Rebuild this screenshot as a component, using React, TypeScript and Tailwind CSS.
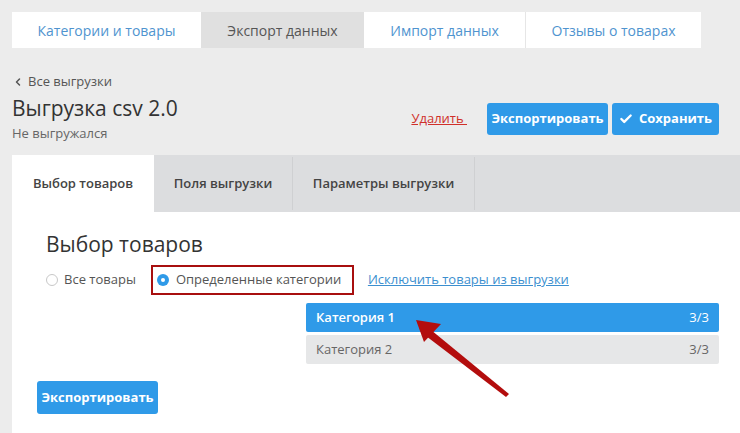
import { Check, ChevronLeft } from 'lucide-react';

const font = { fontFamily: '"Open Sans", Arial, sans-serif' };

function TopTabs() {
  return (
    <div className="flex h-9 text-[14px]">
      <div className="w-[189px] bg-white flex items-center justify-center text-[#4f94cf]">Категории и товары</div>
      <div className="w-[163px] bg-[#e0e0e0] flex items-center justify-center text-[#555]">Экспорт данных</div>
      <div className="w-[162px] bg-white flex items-center justify-center text-[#4f94cf] border-r border-[#e6e6e6]">Импорт данных</div>
      <div className="w-[175px] bg-white flex items-center justify-center text-[#4f94cf]">Отзывы о товарах</div>
    </div>
  );
}

function Radio({ checked }: { checked?: boolean }) {
  return checked ? (
    <span className="w-3 h-3 rounded-full bg-[#2f9ae8] flex items-center justify-center">
      <span className="w-1 h-1 rounded-full bg-white" />
    </span>
  ) : (
    <span className="w-3 h-3 rounded-full border border-[#c8c8c8] bg-white" />
  );
}

export default function App() {
  return (
    <div className="relative w-[740px] h-[433px] overflow-hidden bg-[#ececec] pl-3 pt-3" style={font}>
      <TopTabs />

      <div className="flex justify-between pr-[21px] mt-[26px]">
        <div>
          <div className="flex items-center h-4 text-[13px] text-[#555]">
            <ChevronLeft className="w-3 h-3 mr-1" strokeWidth={3} />
            Все выгрузки
          </div>
          <div className="h-7 mt-1 text-[21px] leading-7 text-[#333]">Выгрузка csv 2.0</div>
          <div className="h-4 mt-[3px] text-[13px] leading-4 text-[#666]">Не выгружался</div>
        </div>
        <div className="flex items-center self-end mb-[6px] gap-1">
          <a className="text-[13px] text-[#d0302a] underline mr-4">Удалить&nbsp;</a>
          <button className="w-[121px] h-8 rounded-[3px] bg-[#2f9ae8] text-white text-[13px] font-bold">Экспортировать</button>
          <button className="w-[107px] h-8 rounded-[3px] bg-[#2f9ae8] text-white text-[13px] font-bold flex items-center justify-center gap-1.5">
            <Check className="w-3.5 h-3.5" strokeWidth={4} />
            Сохранить
          </button>
        </div>
      </div>

      <div className="mt-[14px] bg-white h-[300px]">
        <div className="flex h-[57px] bg-[#dcdddf] text-[13px] font-semibold text-[#444]">
          <div className="w-[142px] bg-white flex items-center justify-center">Выбор товаров</div>
          <div className="w-[139px] flex items-center justify-center border-r border-[#cfd0d2] my-[2px]">Поля выгрузки</div>
          <div className="w-[182px] flex items-center justify-center border-r border-[#cfd0d2] my-[2px]">Параметры выгрузки</div>
        </div>

        <div className="pl-[25px] pt-[18px]">
          <div className="ml-[9px] text-[21px] leading-7 text-[#333]">Выбор товаров</div>
          <div className="ml-[9px] mt-[7px] flex items-center text-[13px] text-[#555]">
            <div className="flex items-center gap-1.5">
              <Radio />
              <span>Все товары</span>
            </div>
            <div className="ml-[15px] h-[30px] w-[203px] border-2 border-[#a80f0f] flex items-center pl-1">
              <div className="flex items-center gap-[7px]">
                <Radio checked />
                <span>Определенные категории</span>
              </div>
            </div>
            <a className="ml-[14px] text-[#3c8fcf] underline">Исключить товары из выгрузки</a>
          </div>

          <div className="ml-[269px] mt-2 w-[413px] flex flex-col gap-[3px] text-[13px]">
            <div className="h-[29px] rounded-[2px] bg-[#2f9ae8] text-white font-semibold flex items-center justify-between px-[10px]">
              <span>Категория 1</span>
              <span className="font-normal">3/3</span>
            </div>
            <div className="h-[29px] rounded-[2px] bg-[#e6e7e8] text-[#666] flex items-center justify-between px-[10px]">
              <span>Категория 2</span>
              <span>3/3</span>
            </div>
          </div>

          <button className="mt-[17px] w-[121px] h-[33px] rounded-[3px] bg-[#2f9ae8] text-white text-[13px] font-bold">Экспортировать</button>
        </div>
      </div>

      <svg className="absolute left-0 top-0 pointer-events-none" width="740" height="433">
        <polygon points="509,394 506,397 426,336 431,330" fill="#b30d0d" />
        <polygon points="416,320 441,324 424,342" fill="#b30d0d" />
      </svg>
    </div>
  );
}
